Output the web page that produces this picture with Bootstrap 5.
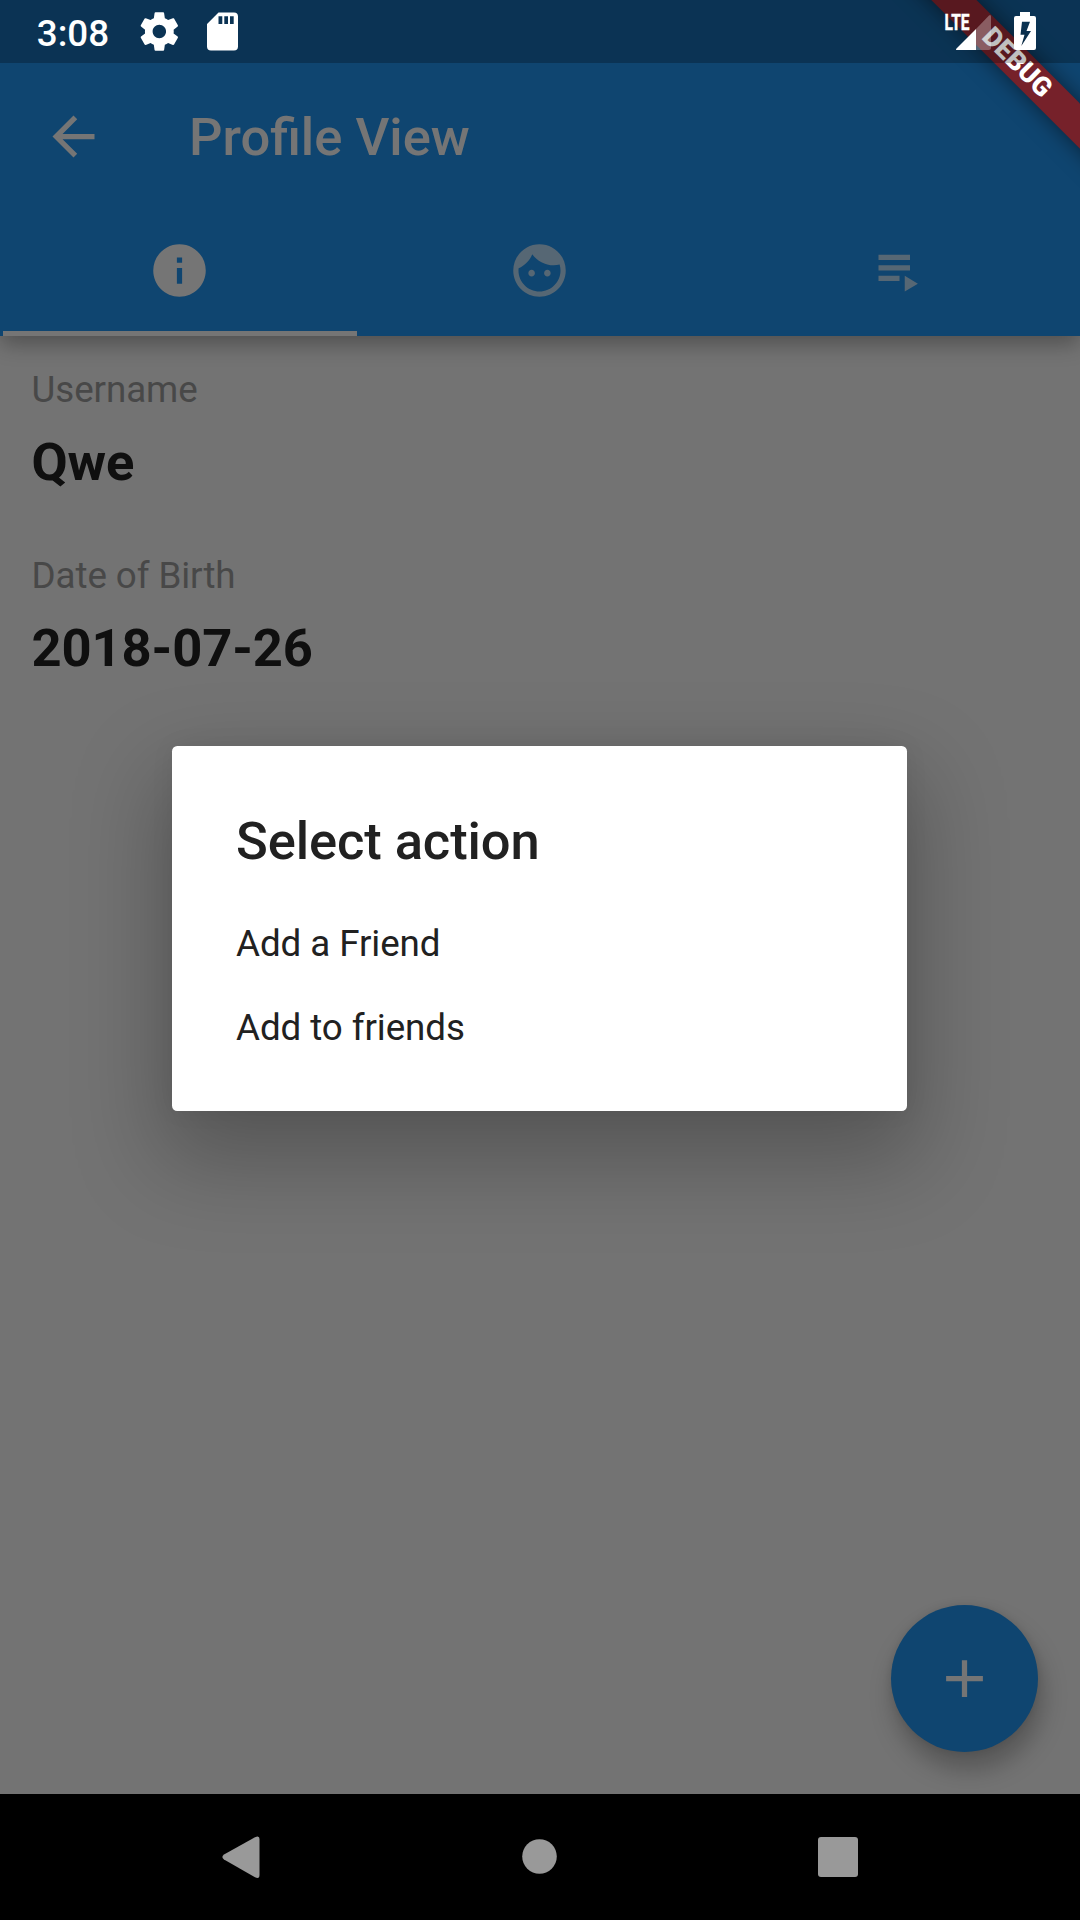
<!DOCTYPE html>
<html lang="en">
<head>
<meta charset="utf-8">
<meta name="viewport" content="width=device-width, initial-scale=1">
<title>Profile View</title>
<link href="https://cdn.jsdelivr.net/npm/bootstrap@5.3.0/dist/css/bootstrap.min.css" rel="stylesheet">
<style>
body { font-family: Roboto, "Liberation Sans", sans-serif; background: #000; }
svg { display: block; fill: currentColor; }
.screen { width: 1080px; height: 1920px; }
.app { background: #fafafa; }
.topbar { padding-top: 63px; background: #2196f3; color: #fff; box-shadow: 0 9px 20px -1px rgba(0,0,0,.3); z-index: 1; }
.toolbar { height: 147px; padding-left: 42px; gap: 84px; }
.headline { font-size: 52.5px; line-height: 62px; font-weight: 500; }
.tabs { height: 126px; }
.tabs .nav-link { padding: 0 1px 5.25px 0; color: rgba(255,255,255,.7); border-bottom: 0; }
.tabs .nav-link.active { color: #fff; position: relative; }
.tabs .nav-link.active::after { content: ""; position: absolute; left: 2.6px; right: 2.6px; bottom: 0; height: 5.25px; background: #fff; }
.fields { padding: 32px 31.5px; gap: 61px; }
.fields dl { gap: 20px; }
.fields dt { font-size: 36.75px; line-height: 43px; font-weight: 400; letter-spacing: -.08px; color: #9e9e9e; }
.fields dd { font-size: 52.5px; line-height: 62px; font-weight: 700; letter-spacing: -.1px; color: #212121; }
.fab { width: 147px; height: 147px; right: 42px; bottom: 42px; background: #2196f3; color: #fff; box-shadow: 4px 17px 24px 1px rgba(0,0,0,.25), 0 0 10px rgba(0,0,0,.1); }
.scrim { background: rgba(0,0,0,.54); z-index: 2; padding: 63px 1px 0 0; }
.dialog-box { width: 735px; border-radius: 5.25px; padding: 64px 0 41px; color: #212121; box-shadow: 0 39px 87px 12px rgba(0,0,0,.25), 0 0 24px rgba(0,0,0,.06); }
.dialog-box h2 { padding: 0 64px; margin-bottom: 30px; letter-spacing: -.1px; }
.option { font-size: 36.75px; line-height: 42px; padding: 21px 64px; letter-spacing: -.08px; color: inherit; }
.ribbon-area { width: 220px; height: 220px; z-index: 3; }
.ribbon { width: 300px; height: 31.5px; left: 7.25px; top: 47px; transform: rotate(45deg); background: #76212a; box-shadow: 0 0 21px rgba(0,0,0,.5); font-size: 26.8px; line-height: 31.5px; font-weight: 900; }
.statusbar { height: 63px; background: rgba(0,0,0,.25); z-index: 4; }
.clock { font-size: 36.75px; font-weight: 500; }
.navbar-sys { height: 126px; color: #999; }
</style>
</head>
<body>
<div class="screen d-flex flex-column position-relative overflow-hidden">
  <div class="app flex-grow-1 d-flex flex-column position-relative">
    <header class="topbar position-relative">
      <div class="toolbar d-flex align-items-center">
        <svg width="63" height="63" viewBox="0 0 24 24"><path d="M20 11H7.83l5.59-5.59L12 4l-8 8 8 8 1.41-1.41L7.83 13H20v-2z"/></svg>
        <h1 class="headline mb-0">Profile View</h1>
      </div>
      <nav class="tabs nav nav-justified flex-nowrap">
        <a class="nav-link active d-flex align-items-center justify-content-center" href="#">
          <svg width="63" height="63" viewBox="0 0 24 24"><path d="M12 2C6.48 2 2 6.48 2 12s4.48 10 10 10 10-4.48 10-10S17.52 2 12 2zm1 15h-2v-6h2v6zm0-8h-2V7h2v2z"/></svg>
        </a>
        <a class="nav-link d-flex align-items-center justify-content-center" href="#">
          <svg width="63" height="63" viewBox="0 0 24 24"><path d="M9 11.75c-.69 0-1.25.56-1.25 1.25s.56 1.25 1.25 1.25 1.25-.56 1.25-1.25-.56-1.25-1.25-1.25zm6 0c-.69 0-1.25.56-1.25 1.25s.56 1.25 1.25 1.25 1.25-.56 1.25-1.25-.56-1.25-1.25-1.25zM12 2C6.48 2 2 6.48 2 12s4.48 10 10 10 10-4.48 10-10S17.52 2 12 2zm0 18c-4.41 0-8-3.59-8-8 0-.29.02-.58.05-.86 2.36-1.05 4.23-2.98 5.21-5.37C11.07 8.33 14.05 10 17.42 10c.78 0 1.53-.09 2.25-.26.21.71.33 1.47.33 2.26 0 4.41-3.59 8-8 8z"/></svg>
        </a>
        <a class="nav-link d-flex align-items-center justify-content-center" href="#">
          <svg width="63" height="63" viewBox="0 0 24 24"><path d="M4 10h12v2H4zm0-4h12v2H4zm0 8h8v2H4zm10 0v6l5-3z"/></svg>
        </a>
      </nav>
    </header>
    <main class="fields d-flex flex-column">
      <dl class="d-flex flex-column mb-0"><dt>Username</dt><dd class="mb-0">Qwe</dd></dl>
      <dl class="d-flex flex-column mb-0"><dt>Date of Birth</dt><dd class="mb-0">2018-07-26</dd></dl>
    </main>
    <button class="fab btn rounded-circle border-0 p-0 position-absolute d-flex align-items-center justify-content-center" aria-label="Add">
      <svg width="63" height="63" viewBox="0 0 24 24"><path d="M19 13h-6v6h-2v-6H5v-2h6V5h2v6h6v2z"/></svg>
    </button>
    <div class="scrim position-absolute top-0 start-0 w-100 h-100 d-flex align-items-center justify-content-center">
      <section class="dialog-box bg-white" role="dialog">
        <h2 class="headline">Select action</h2>
        <a class="option d-block text-decoration-none" href="#">Add a Friend</a>
        <a class="option d-block text-decoration-none" href="#">Add to friends</a>
      </section>
    </div>
  </div>
  <footer class="navbar-sys bg-black d-flex">
    <svg width="1080" height="126" viewBox="0 0 1080 126">
      <path d="M224 60.500L255 43.200Q259.500 41 259.500 45V81Q259.500 85.500 255 83.200L224 65.500Q220.800 63 224 60.500Z"/>
      <circle cx="539.500" cy="62.500" r="17.300"/>
      <rect x="818" y="43" width="40" height="40" rx="3"/>
    </svg>
  </footer>
  <div class="ribbon-area position-absolute top-0 end-0 overflow-hidden">
    <div class="ribbon position-absolute text-center text-white">DEBUG</div>
  </div>
  <div class="statusbar position-absolute top-0 start-0 w-100 text-white">
    <svg width="1080" height="63" viewBox="0 0 1080 63">
      <text class="clock" x="36.800" y="46">3:08</text>
      <path transform="translate(136.300 8.500) scale(1.92)" d="M19.430 12.980c.04-.32.07-.64.07-.98s-.03-.66-.07-.98l2.110-1.650c.19-.15.24-.42.12-.64l-2-3.460c-.12-.22-.39-.3-.61-.22l-2.490 1c-.52-.4-1.080-.73-1.690-.98l-.38-2.650C14.460 2.180 14.250 2 14 2h-4c-.25 0-.46.18-.49.42l-.38 2.650c-.61.25-1.170.59-1.690.98l-2.490-1c-.23-.09-.49 0-.61.22l-2 3.460c-.13.22-.07.49.12.64l2.110 1.650c-.04.32-.07.65-.07.98s.03.66.07.98l-2.110 1.650c-.19.15-.24.42-.12.64l2 3.460c.12.22.39.3.61.22l2.490-1c.52.4 1.080.73 1.690.98l.38 2.650c.03.24.24.42.49.42h4c.25 0 .46-.18.49-.42l.38-2.650c.61-.25 1.170-.59 1.690-.98l2.490 1c.23.09.49 0 .61-.22l2-3.460c.12-.22.07-.49-.12-.64l-2.110-1.650zM12 15.500c-1.930 0-3.500-1.570-3.500-3.500s1.570-3.500 3.500-3.500 3.500 1.570 3.500 3.500-1.570 3.500-3.500 3.500z"/>
      <path fill-rule="evenodd" d="M218.500 12.500H234Q238 12.500 238 16.500V46.500Q238 50.500 234 50.500H211Q207 50.500 207 46.500V24ZM218.500 16.300V24H222.300V16.300ZM224.300 16.300V24H228V16.300ZM230 16.300V24H233.700V16.300Z"/>
      <text x="944.500" y="30" font-size="22.500" font-weight="700" textLength="25" lengthAdjust="spacingAndGlyphs" stroke="currentColor" stroke-width=".5">LTE</text>
      <path fill-opacity=".3" d="M976 29L989 15.500Q991 14 991 17V47.500Q991 50 988.500 50H976Z"/>
      <path d="M976 29V50H957.500Q955 50 956.500 48.500Z"/>
      <path fill-rule="evenodd" d="M1020 12H1030V16H1034Q1036 16 1036 18V48Q1036 50 1034 50H1016Q1014 50 1014 48V18Q1014 16 1016 16H1020ZM1022 21.700L1020.500 34.700H1024.500L1021.300 46L1031 31H1026.500L1030 21.700Z"/>
    </svg>
  </div>
</div>
<script src="https://cdn.jsdelivr.net/npm/bootstrap@5.3.0/dist/js/bootstrap.bundle.min.js"></script>
</body>
</html>
